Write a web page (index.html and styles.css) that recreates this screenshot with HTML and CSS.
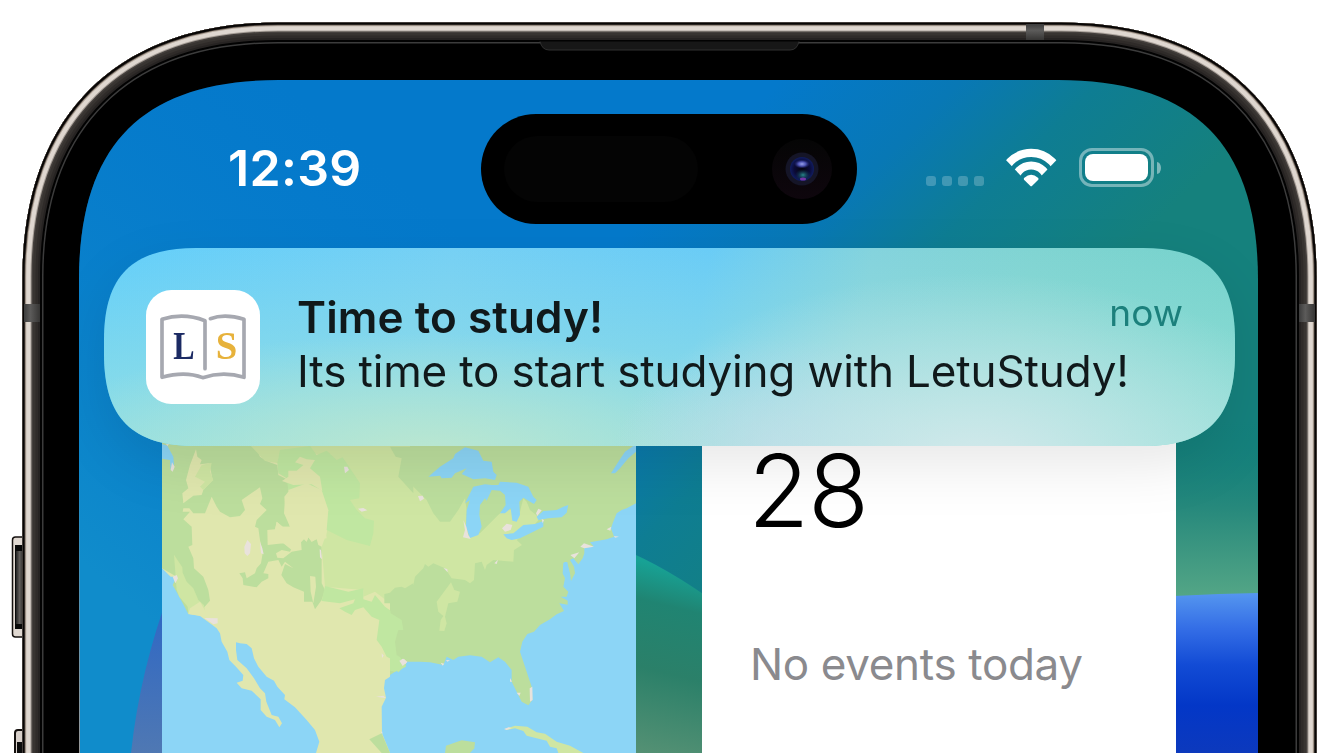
FILE: index.html
```
<!DOCTYPE html>
<html lang="en">
<head>
<meta charset="utf-8">
<title>LetuStudy notification</title>
<link rel="stylesheet" href="styles.css">
</head>
<body>
<main class="device">
  <svg class="frame" viewBox="0 0 1339 753" aria-hidden="true">
    <defs>
      <path id="body" d="M22.5 900V277C22.5 116 117.500 22.500 278 22.500H1061C1221.500 22.500 1316.500 116 1316.500 277V900Z"/>
      <clipPath id="bodyClip"><use href="#body"/></clipPath>
      <linearGradient id="btn"><stop offset="0" stop-color="#222"/><stop offset=".5" stop-color="#615d5a"/><stop offset="1" stop-color="#333"/></linearGradient>
      <linearGradient id="band" x2="0" y2="1"><stop offset="0" stop-color="#3c3c3c"/><stop offset=".4" stop-color="#5c5b5a"/><stop offset="1" stop-color="#363534"/></linearGradient>
      <linearGradient id="sideBand"><stop offset="0" stop-color="#3c3c3c"/><stop offset=".4" stop-color="#5c5b5a"/><stop offset="1" stop-color="#363534"/></linearGradient>
    </defs>
    <g>
      <rect x="12.500" y="537" width="16" height="100" rx="3" fill="#e0d8d1" stroke="#15110f" stroke-width="1.500"/>
      <rect x="15" y="545" width="10" height="84" fill="#080808"/>
      <rect x="16" y="551" width="7" height="73" fill="url(#btn)"/>
      <rect x="15" y="730" width="16" height="60" rx="3" fill="#d8d0ca" stroke="#15110f" stroke-width="2"/>
      <rect x="17" y="742" width="9" height="40" fill="#0c0c0c"/>
    </g>
    <use href="#body" fill="#000"/>
    <g clip-path="url(#bodyClip)" fill="none">
      <use href="#body" stroke="#3c3c3c" stroke-width="42"/>
      <use href="#body" stroke="#020202" stroke-width="39"/>
      <use href="#body" stroke="#262322" stroke-width="35"/>
      <use href="#body" stroke="#2f2b29" stroke-width="31"/>
      <use href="#body" stroke="#383431" stroke-width="26"/>
      <use href="#body" stroke="#45403d" stroke-width="21"/>
      <use href="#body" stroke="#a79f98" stroke-width="18"/>
      <use href="#body" stroke="#dfd7d0" stroke-width="16"/>
      <use href="#body" stroke="#b5a99d" stroke-width="7.500"/>
      <use href="#body" stroke="#4c433d" stroke-width="5.500"/>
      <use href="#body" stroke="#070504" stroke-width="3.800"/>
    </g>
    <rect x="1026" y="24" width="18" height="16" fill="url(#band)"/>
    <rect x="24" y="304" width="16" height="18" fill="url(#sideBand)"/>
    <rect x="1299" y="304" width="16" height="18" fill="url(#sideBand)"/>
    <path d="M540 41.500Q542 50 549 50H790Q797 50 799 41.500" fill="#171717" stroke="#303030"/>
  </svg>

  <section class="screen">
    <svg class="wallpaper" viewBox="79 80 1179 673" preserveAspectRatio="none" aria-hidden="true">
      <defs>
        <linearGradient id="sky" gradientUnits="userSpaceOnUse" x1="430" y1="430" x2="690" y2="690">
          <stop offset="0" stop-color="#0479cb"/><stop offset=".35" stop-color="#0878b5"/><stop offset=".62" stop-color="#0e7d93"/><stop offset="1" stop-color="#15817d"/>
        </linearGradient>
        <linearGradient id="leftSky" gradientUnits="userSpaceOnUse" x1="79" y1="560" x2="400" y2="180"><stop offset="0" stop-color="#108ccb"/><stop offset="1" stop-color="#0a7ecc" stop-opacity="0"/></linearGradient>
        <linearGradient id="meadow" gradientUnits="userSpaceOnUse" x1="0" y1="420" x2="0" y2="597"><stop offset="0" stop-color="#0f7d78" stop-opacity="0"/><stop offset=".5" stop-color="#27897c"/><stop offset="1" stop-color="#54a686"/></linearGradient>
        <linearGradient id="sea" x2="0" y2="1"><stop offset="0" stop-color="#5596ef"/><stop offset=".22" stop-color="#346ee6"/><stop offset=".45" stop-color="#124bd5"/><stop offset=".7" stop-color="#0337c7"/><stop offset="1" stop-color="#0c39bd"/></linearGradient>
        <linearGradient id="hill" gradientUnits="userSpaceOnUse" x1="680" y1="570" x2="636" y2="753"><stop offset="0" stop-color="#17a295"/><stop offset=".2" stop-color="#208472"/><stop offset=".55" stop-color="#2b8069"/><stop offset="1" stop-color="#559174"/></linearGradient>
        <linearGradient id="dusk" x2="0" y2="1"><stop offset="0" stop-color="#2b66c7"/><stop offset="1" stop-color="#4f78b3"/></linearGradient>
        <linearGradient id="edge" x2="0" y2="1"><stop offset=".4" stop-color="#999" stop-opacity="0"/><stop offset="1" stop-color="#999"/></linearGradient>
      </defs>
      <rect x="79" y="80" width="1179" height="673" fill="url(#sky)"/>
      <rect x="79" y="80" width="500" height="673" fill="url(#leftSky)"/>
      <rect x="1100" y="420" width="158" height="180" fill="url(#meadow)"/>
      <path d="M1100 602Q1180 594 1258 593V753H1100Z" fill="url(#sea)"/>
      <path d="M620 548Q667 567 720 606V753H620Z" fill="url(#hill)"/>
      <path d="M131 753Q140 670 170 590V753Z" fill="url(#dusk)"/>
      <rect x="79" y="280" width="1" height="473" fill="url(#edge)"/>
    </svg>

    <header class="status">
      <div class="clock">12:39</div>
      <div class="island">
        <span class="sensor"></span>
        <svg class="camera" viewBox="-30 -30 60 60" aria-hidden="true">
          <defs>
            <radialGradient id="lens"><stop offset="0" stop-color="#05030d"/><stop offset=".65" stop-color="#0b0b38"/><stop offset="1" stop-color="#101c60"/></radialGradient>
            <radialGradient id="glint"><stop offset="0" stop-color="#98a0e8"/><stop offset=".5" stop-color="#4a50b0"/><stop offset="1" stop-color="#252a78" stop-opacity="0"/></radialGradient>
            <radialGradient id="tealGlint"><stop offset="0" stop-color="#298888"/><stop offset="1" stop-color="#0b3050" stop-opacity="0"/></radialGradient>
            <linearGradient id="ring" x2="0" y2="1"><stop offset="0" stop-color="#050505"/><stop offset="1" stop-color="#0e060d"/></linearGradient>
          </defs>
          <circle r="30" fill="url(#ring)"/>
          <circle r="16.500" fill="#151527"/>
          <circle r="12" fill="url(#lens)"/>
          <ellipse cy="-5" rx="8" ry="4.500" fill="url(#glint)"/>
          <ellipse cy="6" cx="1" rx="8" ry="6" fill="url(#tealGlint)"/>
          <ellipse cy="10" cx="1" rx="3" ry="1.500" fill="#7435a5"/>
        </svg>
      </div>
      <div class="indicators">
        <span class="signal"><i></i><i></i><i></i><i></i></span>
        <svg class="wifi" viewBox="317 445 156 114" aria-label="Wi-Fi">
          <clipPath id="wedge"><path d="M394 558L289 448V400H499V448Z"/></clipPath>
          <g clip-path="url(#wedge)" fill="none" stroke="#fff" stroke-width="24"><circle cx="394" cy="545" r="86"/><circle cx="394" cy="545" r="49"/></g>
          <path d="M391 556L373 538Q371 535 374 532Q394 515 414 532Q417 535 415 538L397 556Q394 559 391 556Z" fill="#fff"/>
        </svg>
        <span class="battery"><span class="charge"></span></span>
        <span class="nub"></span>
      </div>
    </header>

    <div class="widgets">
      <div class="widget map">
        <svg viewBox="162 440 474 313" aria-label="Map">
          <rect x="162" y="440" width="474" height="313" fill="#8cd5f6"/>
          <g transform="translate(390 430) scale(.33333)">
            <path fill="#bcde9d" d="M-10 20H738V220L710 235 695 240 680 250 668 280 663 295 672 320 650 328 600 337 610 348 583 355 583 370 578 385 565 403 550 385 540 390 552 410 555 430 543 453 540 430 532 398H520L518 430 525 445 520 470 535 485 530 500 512 500 533 512V524L508 520 522 543 500 553 480 568 450 585 432 605 412 612 397 635 390 665 405 710 425 770 427 810 415 826 395 815 385 795 365 755V720L345 695 325 682 300 697 275 680 240 676 205 680 190 690 170 680 160 705 120 697 90 695 50 695 45 710 15 725 0 735H-10Z"/>
            <path fill="#cfe6a3" d="M-10 48H35L22 90 22 140 50 150 110 210 130 250 150 275H180L205 240 225 205 230 240 225 320 270 310 345 235 390 245 400 205 410 215 420 240 450 265 420 300 380 330 396 345 372 360 370 395 310 390 290 405 285 420 275 395 255 400 252 450 240 460 225 450 185 445 165 415 130 400 115 410 105 402 100 415 75 440 70 465 55 478 30 472 -10 490Z"/>
            <path fill="#bcde9d" d="M275 278L270 225 290 215 305 185 330 182 345 210 342 235 330 250 310 258Z"/>
            <path fill="#cfe6a3" d="M183 457L193 480 210 485 202 515 175 520 165 560 170 580 163 603 148 602 152 570 160 558 145 545 140 515Z"/>
            <path fill="#c0e7a1" d="M-10 540L10 570 40 575 40 600 15 620 30 640 30 680 48 710 15 725-10 720Z"/>
            <g fill="#8cd5f6">
              <path d="M115 140L150 110 190 85 195 72 225 52 265 62 280 92 305 95 310 125 320 135 315 150 285 145 250 148 215 132 230 115 195 130 185 143 155 145 150 137Z"/>
              <path d="M225 220L250 170 285 163 305 165 325 165 330 155 380 158 415 170 430 200 440 210 432 222 400 203 388 215 390 255 380 275 367 272 362 235 345 250 330 250 347 225 345 195 330 182 305 180 290 212 285 205 270 225 268 255 275 290 265 315 240 324 228 290 230 240 240 210Z"/>
              <path d="M340 313L370 310 400 285 435 282 460 273 460 290 430 305 390 325 365 330 350 325Z"/>
              <path d="M440 260L460 243 500 240 520 230 535 225 530 248 515 262 475 265 445 270Z"/>
              <path d="M663 130L685 95 705 65 730 48H738V65L715 85 690 115 675 130Z"/>
              <path d="M523 396H532L530 430 520 435Z"/>
            </g>
            <g fill="#e9e2dc"><path d="M220 270L229 290 235 315 242 327 219 322 225 300ZM336 295L350 281 367 285 362 300 345 305ZM571 350L582 340 612 350 583 355ZM541 375L568 367 553 385ZM28 690L38 686 52 695 40 708 30 703ZM419 775L427 770 428 810 420 815ZM380 788L392 788 388 798ZM84 198L98 197 102 206 90 214ZM160 413L172 418 173 427ZM438 250L445 236 455 241 442 258ZM313 400L324 389 320 402ZM650 298L664 290 661 302ZM672 318L687 320 675 323ZM168 690L180 691 172 695ZM152 698L163 701 158 707ZM360 744L366 755 360 755ZM455 267L462 270 458 280Z"/></g>
            <path fill="#cfe6a3" d="M345 897L375 887 412 890 440 907 465 911 500 935 540 947 580 969H505L500 955 480 950 470 932 440 925 410 917 400 903 375 895 350 900Z"/>
            <path fill="#e9e2dc" d="M342 897L356 892 365 894 350 900Z"/>
            <path fill="#bcde9d" d="M168 947L215 931 255 937 253 955 240 969H165Z"/>
          </g>
          <g transform="translate(150 430) scale(.33333)">
            <path fill="#e0e7ae" d="M30 20H720V740L705 750 702 775 708 803 695 830 696 910 720 969H498L508 935 495 900 470 870 435 832 403 808 405 795 382 770 372 752 350 740 325 710 312 685 305 655 290 642 270 640 258 637V660L262 690 290 715 312 745 330 775 345 790 349 815 365 855 385 860 396 880 388 892 375 870 350 860 332 840V808L305 782 275 775 260 758 278 752 280 735 258 710 238 690 232 665 215 635 210 610 200 595 180 580 150 558 115 552V532L100 515 88 500 80 480 68 465 80 460 78 440 62 440 36 415 30 410Z"/>
            <path fill="#bcde9d" d="M30 20H305L330 80 355 95 382 105 385 135 415 150V185L403 200 407 250 420 290 398 290 380 275 375 298 352 300 353 345 400 340 425 355 420 365 395 360 378 370 382 383 400 385 425 365 455 360 453 335 462 327 470 335 475 322 485 335 500 328 505 345 515 350V460L525 480 515 510 495 538 487 515 462 515V485L430 472 410 460 394 435 405 402 430 415 405 395 395 410 385 390 355 395 340 430 355 432 355 445 335 455 320 472 280 465 278 445 268 430 285 427 290 445 315 430 320 415 333 400 338 370 330 330 325 295 315 290 320 270 350 240 330 222 337 205 330 172 275 210 285 240 270 258 240 262 210 245 200 230 185 200 165 250 130 250 118 235 100 235 98 245 120 245 100 268 125 290 127 345 115 350 130 385 132 415 160 440 175 480 180 512 160 535 160 550 115 552 88 500 68 465 80 440 36 415Z"/>
            <path fill="#e0e7ae" d="M138 58L142 80 155 90 150 103 178 100 188 150 160 180 155 195 130 197 100 220 97 190 115 175 108 150 120 105Z"/>
            <path fill="#cfe6a3" d="M155 105L185 98 180 125 190 150 160 180 150 170 165 155 135 140ZM72 374L97 412 98 428 110 455 130 475 145 510 162 525 166 550 115 552 113 530 88 500 80 480Z"/>
            <path fill="#e0e7ae" d="M120 535L150 515 170 550 160 558 115 552Z"/>
            <path fill="#cfe6a3" d="M300 45H780V480L720 520 675 485 640 500 640 480 525 470 515 350 530 310 560 130 520 80 470 60 385 100 345 93Z"/>
            <path fill="#c0e7a1" d="M382 100L390 60 480 48 500 75 530 62 560 90 578 82 610 130 630 160 628 205 600 210 620 240 645 265 672 272 670 310 660 348 590 330 530 300 535 240 515 180 470 160 415 180 410 145 385 130Z"/>
            <path fill="#e0e7ae" d="M396 153L415 140V122L440 122 460 105 435 97 450 80 470 88 495 90 480 115 510 140 517 183 485 163 430 165ZM415 187L440 205 460 250 470 235 465 202 480 195 505 198 510 225 535 240 525 275 530 325 505 328 500 325 485 335 475 322 470 335 462 327 450 340 450 360 425 360 400 340 355 338 355 300 375 300 380 275 398 290 420 290 402 250 405 205ZM480 438L496 440 498 470 490 520 482 485Z"/>
            <path fill="#c0e7a1" d="M525 468L595 485 640 475 640 508 665 515 675 495 705 530 762 570 762 640 740 670 768 705 745 727 732 715 730 690 710 680 695 650 680 630 688 570 665 560 640 532 615 540 605 555 585 545 568 535 610 520 615 508 570 520 515 513Z"/>
            <path fill="#bcde9d" d="M703 492L720 488 735 473 755 470 765 475 790 460V690L765 690 740 675 735 635 745 600 760 600 755 570 722 550 720 520 703 520ZM720 50H790V190L745 140 755 85 737 80Z"/>
            <path fill="#bcde9d" d="M658 928L695 910 720 969H695Z"/>
            <path fill="#8cd5f6" d="M30 40L52 47 70 80 72 105 62 120 60 90 30 85Z"/>
            <path fill="#e9e2dc" d="M66 97L74 110 68 125 62 120ZM68 440L80 435 84 445 76 460ZM163 564L203 565V580L190 583ZM283 350L292 330 303 342 300 370 292 378 284 370ZM330 335L337 355 341 373 333 370ZM582 110L592 110 597 120 585 130ZM624 236L640 234 652 241 635 245ZM509 358L513 360 516 388 510 382ZM748 692L762 686 771 697 758 708ZM678 800L700 797 708 804ZM695 670L701 677 696 684ZM692 905L697 905 697 912ZM48 42L57 43 52 48Z"/>
          </g>
        </svg>
      </div>
      <div class="widget calendar">
        <div class="day">28</div>
        <div class="events">No events today</div>
      </div>
    </div>

    <div class="notice-shadow">
      <article class="notice">
        <svg class="app-icon" viewBox="168 150 342 342" aria-label="LetuStudy">
          <rect x="168" y="150" width="342" height="342" rx="76" fill="#fff"/>
          <g fill="none" stroke="#a6a8b0" stroke-width="11" stroke-linecap="round" stroke-linejoin="round">
            <path d="M345 386V242Q280 217 216 238V412Q285 392 338 413Q400 392 462 412V238Q405 220 361 236"/>
          </g>
          <text class="mark letter-l" transform="translate(250 357) scale(.8 1)">L</text>
          <text class="mark letter-s" transform="translate(377 357) scale(.97 1)">S</text>
        </svg>
        <div class="message">
          <h1 class="title">Time to study!</h1>
          <p class="text">Its time to start studying with LetuStudy!</p>
        </div>
        <time class="when">now</time>
      </article>
    </div>
  </section>
</main>
</body>
</html>
```

FILE: styles.css
```
* { box-sizing: border-box; }

body {
  margin: 0;
  background: #fff;
  font-family: Inter, "Liberation Sans", sans-serif;
}

.device {
  position: relative;
  width: 1339px;
  height: 753px;
  padding: 80px 81px 0 79px;
  overflow: hidden;
}

.frame {
  position: absolute;
  inset: 0;
  width: 1339px;
  height: 753px;
}

.screen {
  position: relative;
  width: 1179px;
  height: 673px;
  clip-path: path("M0 673V200C0 64 64 0 200 0H979C1115 0 1179 64 1179 200V673Z");
}

.wallpaper {
  position: absolute;
  inset: 0;
  width: 100%;
  height: 100%;
}

.status {
  position: relative;
  display: grid;
  grid-template-columns: 402px 376px 1fr;
  height: 168px;
  padding-top: 34px;
}

.clock {
  padding-left: 149px;
  color: #fff;
  font-size: 50px;
  font-weight: 600;
  letter-spacing: .3px;
  line-height: 108px;
  white-space: nowrap;
}

.island {
  display: flex;
  align-items: center;
  justify-content: space-between;
  height: 110px;
  padding: 0 25px 0 23px;
  border-radius: 55px;
  background: #000;
}

.sensor {
  width: 194px;
  height: 66px;
  border-radius: 33px;
  background: #040404;
}

.camera { width: 60px; height: 60px; }

.indicators {
  display: flex;
  align-items: center;
  height: 107px;
  padding-left: 69px;
}

.signal {
  display: flex;
  gap: 6px;
  margin: 27px 21px 0 0;
}

.signal i {
  width: 10px;
  height: 10px;
  border-radius: 3px;
  background: rgba(255, 255, 255, .22);
}

.wifi { width: 53px; height: 39px; margin-right: 21px; }

.battery {
  width: 75px;
  height: 39px;
  padding: 3px;
  border: 3px solid rgba(255, 255, 255, .42);
  border-radius: 13px;
}

.charge {
  display: block;
  width: 63px;
  height: 27px;
  border-radius: 8px;
  background: #fff;
}

.nub {
  width: 4px;
  height: 12px;
  margin-left: 3px;
  border-radius: 0 4px 4px 0 / 0 6px 6px 0;
  background: rgba(255, 255, 255, .45);
}

.widgets {
  position: relative;
  display: flex;
  gap: 66px;
  padding: 192px 0 0 83px;
}

.widget { width: 474px; height: 313px; }

.map svg { display: block; width: 474px; height: 313px; }

.calendar {
  padding: 0 48px;
  background: #fff;
}

.day {
  height: 100px;
  margin-left: -2px;
  color: #000;
  font-size: 100px;
  font-weight: 300;
  letter-spacing: -1.5px;
  line-height: 101px;
}

.events {
  margin-top: 97px;
  color: #8a8a8e;
  font-size: 44px;
  letter-spacing: -.35px;
  line-height: 54px;
  white-space: nowrap;
}

/* The banner floats above the widgets. */
.notice-shadow {
  position: absolute;
  left: 25px;
  top: 168px;
  filter: drop-shadow(0 20px 26px rgba(0, 0, 0, .09));
}

.notice {
  display: flex;
  width: 1131px;
  height: 198px;
  padding: 42px 52px 0 42px;
  background:
    radial-gradient(ellipse 360px 190px at 870px 215px, rgba(214, 233, 236, .95), rgba(205, 232, 234, 0)),
    radial-gradient(ellipse 160px 110px at 670px 198px, rgba(180, 212, 232, .6), rgba(180, 212, 232, 0)),
    radial-gradient(ellipse 400px 120px at 320px 205px, rgba(193, 232, 205, .85), rgba(193, 232, 205, 0)),
    linear-gradient(0deg, rgba(160, 228, 220, .75), rgba(160, 228, 220, 0)),
    linear-gradient(100deg, #64cffa 0%, #76d0f4 30%, #6accf6 52%, #84d3dd 66%, #80d4d2 80%, #74d2cb 100%);
  clip-path: path("M0 92C0 28 28 0 92 0H1039C1103 0 1131 28 1131 92V106C1131 170 1103 198 1039 198H92C28 198 0 170 0 106Z");
}

.app-icon { width: 114px; height: 114px; }

.mark {
  font-family: "Liberation Serif", serif;
  font-size: 120px;
  font-weight: 700;
}

.letter-l { fill: #1b2a63; }
.letter-s { fill: #e7b23b; }

.message {
  width: 812px;
  padding-left: 37px;
  color: #10191b;
}

.title,
.text {
  margin: 0;
  font-size: 44px;
  line-height: 54px;
  white-space: nowrap;
}

.title { letter-spacing: .1px; font-weight: 600; }
.text { letter-spacing: -.15px; font-weight: 400; }

.when {
  margin-left: auto;
  color: #1c807c;
  font-size: 37px;
  line-height: 45px;
}
```
